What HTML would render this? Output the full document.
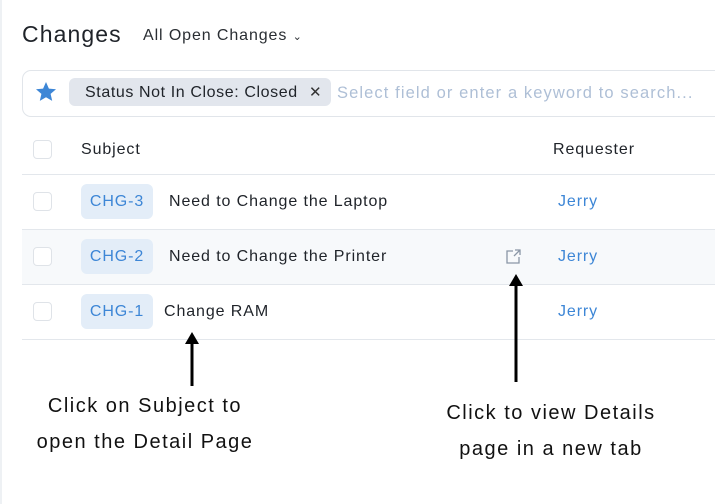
<!DOCTYPE html>
<html><head><style>
body{margin:0;width:715px;height:504px;background:#fff;font-family:"Liberation Sans",sans-serif;position:relative;overflow:hidden;color:#1f2329;letter-spacing:0.9px}
.a{position:absolute;white-space:nowrap}
.cb{position:absolute;left:33px;width:17px;height:17px;border:1px solid #dfe3e8;border-radius:4px;background:#fff}
.line{position:absolute;left:22px;right:0;height:1px;background:#e3e7ec}
.tag{position:absolute;left:81px;width:72px;text-align:center;height:35px;background:#e3edf8;border-radius:6px;color:#3d86d6;font-size:16px;line-height:35px}
.t{position:absolute;font-size:16px;color:#1f2329;white-space:nowrap}
.j{position:absolute;left:558px;font-size:16px;color:#3d86d6}
.ann{position:absolute;font-size:20px;color:#111;text-align:center;width:320px;line-height:36px;letter-spacing:1.5px}
</style></head><body>
<div class="a" style="left:0;top:0;width:2px;height:504px;background:#eef1f4"></div>
<div class="a" style="left:22px;top:21px;font-size:23px;color:#1f2329;letter-spacing:1.1px">Changes</div>
<div class="a" style="left:143px;top:27px;font-size:16px;color:#2a2e33">All Open Changes <span style="font-size:11px">&#8964;</span></div>
<div class="a" style="left:22px;top:70px;width:720px;height:45px;border:1px solid #e1e5ea;border-radius:9px"></div>
<svg class="a" style="left:34px;top:80px" width="24" height="24" viewBox="0 0 24 24"><path d="M12 2l2.9 6.6 7.1.6-5.4 4.7 1.6 7-6.2-3.7-6.2 3.7 1.6-7L2 9.2l7.1-.6z" fill="#3d86d6"/></svg>
<div class="a" style="left:69px;top:78px;width:262px;height:28px;background:#e2e6ed;border-radius:6px"></div>
<div class="a" style="left:85px;top:84px;font-size:16px;color:#1f2329;letter-spacing:0.6px">Status Not In Close: Closed</div>
<div class="a" style="left:309px;top:83px;font-size:15px;color:#333">✕</div>
<div class="a" style="left:337px;top:84px;font-size:16.5px;color:#aebfd6;letter-spacing:1.1px">Select field or enter a keyword to search...</div>
<div class="cb" style="top:140px"></div>
<div class="a" style="left:81px;top:141px;font-size:16px">Subject</div>
<div class="a" style="left:553px;top:141px;font-size:16px">Requester</div>
<div class="line" style="top:174px"></div>
<div class="a" style="left:22px;top:230px;width:700px;height:54px;background:#f7f9fb"></div>
<div class="line" style="top:229px"></div>
<div class="line" style="top:284px"></div>
<div class="line" style="top:339px"></div>
<div class="cb" style="top:192px"></div>
<div class="cb" style="top:247px"></div>
<div class="cb" style="top:302px"></div>
<div class="tag" style="top:184px">CHG-3</div>
<div class="tag" style="top:239px">CHG-2</div>
<div class="tag" style="top:294px">CHG-1</div>
<div class="t" style="left:169px;top:193px">Need to Change the Laptop</div>
<div class="t" style="left:169px;top:248px">Need to Change the Printer</div>
<div class="t" style="left:164px;top:303px">Change RAM</div>
<svg class="a" style="left:504px;top:248px" width="18" height="18" viewBox="0 0 18 18" fill="none" stroke="#8a96a6" stroke-width="1.3"><path d="M9 3H3v12h12V9M10 8l6-6M11 2h5v5"/></svg>
<div class="j" style="top:193px">Jerry</div>
<div class="j" style="top:248px">Jerry</div>
<div class="j" style="top:303px">Jerry</div>
<svg class="a" style="left:0;top:0" width="715" height="504"><g fill="#000"><rect x="190.5" y="342" width="3" height="44"/><path d="M185 344l7-12 7 12z"/><rect x="514.5" y="284" width="3" height="98"/><path d="M509 286l7-12 7 12z"/></g></svg>
<div class="ann" style="left:-15px;top:388px">Click on Subject to<br>open the Detail Page</div>
<div class="ann" style="left:391px;top:395px">Click to view Details<br>page in a new tab</div>
</body></html>
